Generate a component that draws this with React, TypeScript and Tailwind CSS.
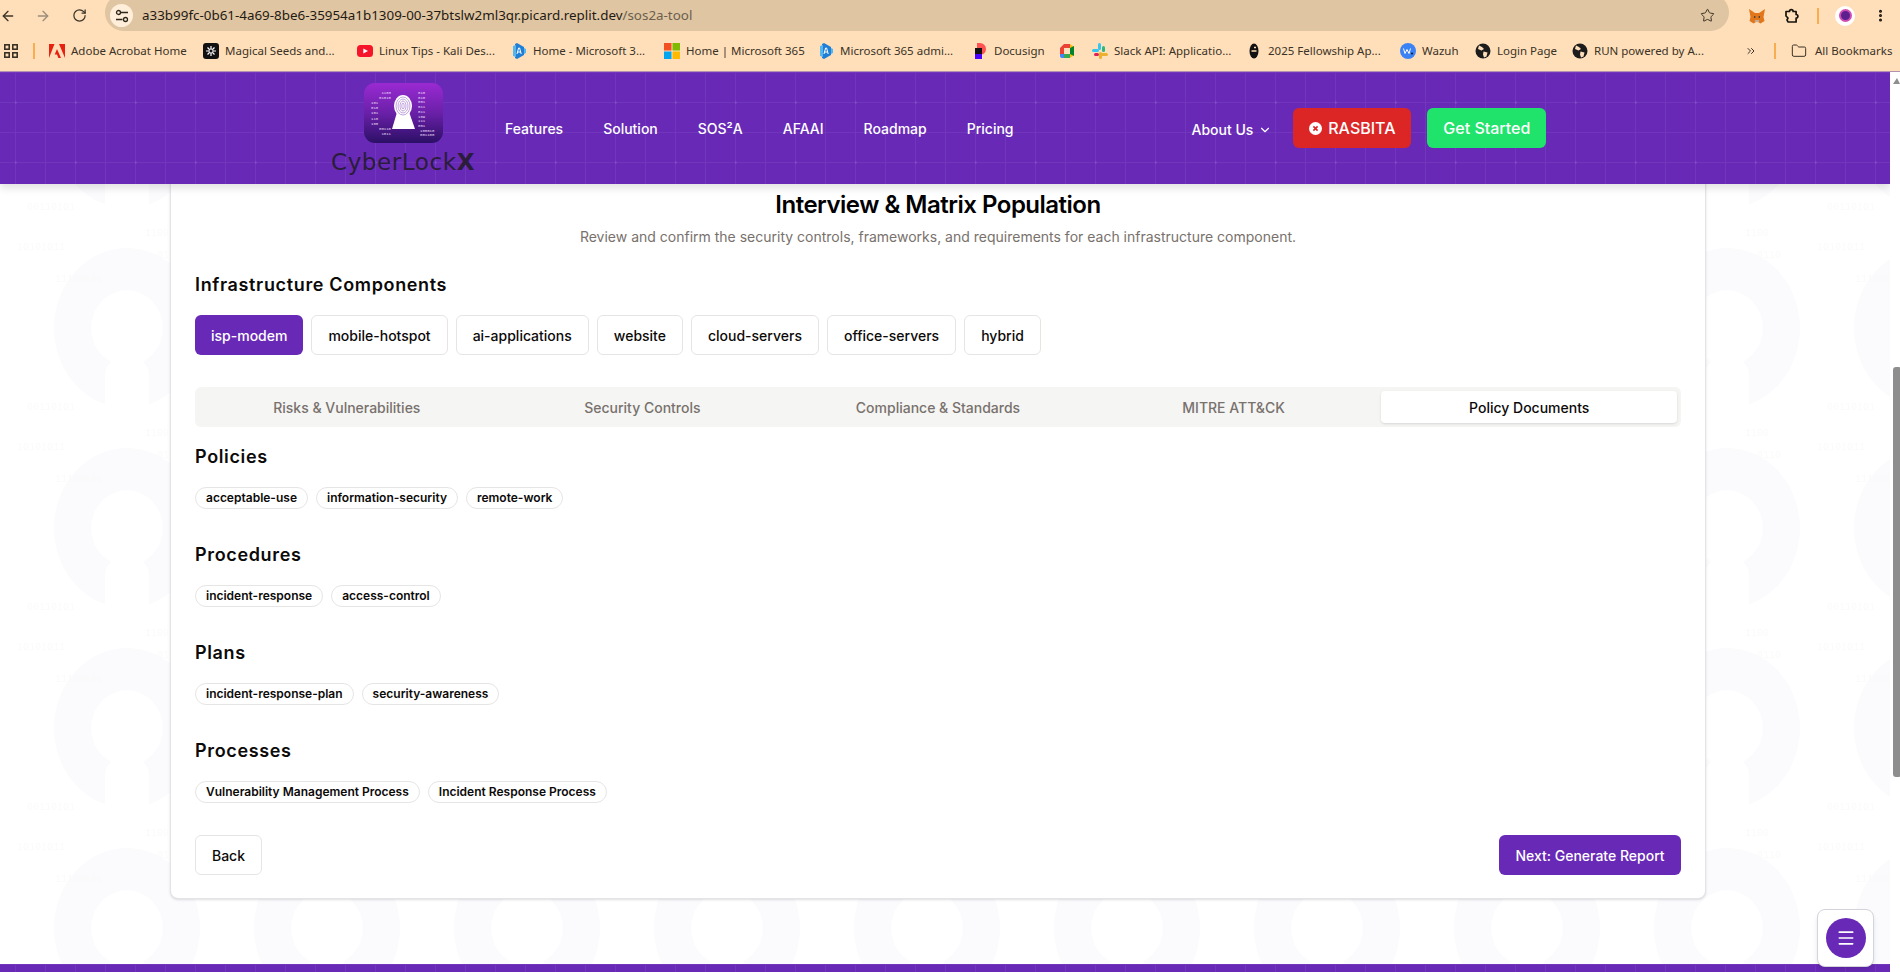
import { ArrowLeft, ArrowRight, RotateCw, Star, EllipsisVertical, ChevronsRight, Folder, ChevronDown, Menu } from "lucide-react";

const PURPLE = "bg-[#6829b7]";

function Fav({ kind }: { kind: string }) {
  if (kind === "adobe")
    return <svg width="16" height="16" viewBox="0 0 16 16"><path d="M0 1h5.5L0 15zM10 1h6v14zM8 6l4 9H9.4L8 11.5H5.7z" fill="#e8200f" /></svg>;
  if (kind === "magic")
    return <svg width="16" height="16" viewBox="0 0 16 16"><rect width="16" height="16" rx="3" fill="#111" /><g stroke="#fff" strokeWidth="1.2"><path d="M8 3v10M3 8h10M4.5 4.5l7 7M11.5 4.5l-7 7" /></g><circle cx="8" cy="8" r="2" fill="#111" stroke="#fff" strokeWidth="0.8" /></svg>;
  if (kind === "yt")
    return <svg width="16" height="16" viewBox="0 0 16 16"><rect y="2" width="16" height="12" rx="3.5" fill="#f5142a" /><path d="M6.3 5.4v5.2L11 8z" fill="#fff" /></svg>;
  if (kind === "ai")
    return <svg width="16" height="16" viewBox="0 0 16 16"><path d="M6 0l7 4v8l-7 4-2-1V1z" fill="#1f7fd6" /><path d="M2 3l3-1v12l-3-1z" fill="#55b6ee" /><path d="M13 5l2 1v4l-2 1z" fill="#55b6ee" /><path d="M6 11l1.6-6h1l1.6 6M6.6 9h3" stroke="#fff" strokeWidth="1" fill="none" /></svg>;
  if (kind === "ms")
    return <svg width="16" height="16" viewBox="0 0 16 16"><rect width="7.5" height="7.5" fill="#f25022" /><rect x="8.5" width="7.5" height="7.5" fill="#7fba00" /><rect y="8.5" width="7.5" height="7.5" fill="#00a4ef" /><rect x="8.5" y="8.5" width="7.5" height="7.5" fill="#ffb900" /></svg>;
  if (kind === "docu")
    return <svg width="16" height="16" viewBox="0 0 16 16"><path d="M5 0h3a6 6 0 0 1 6 6 6 6 0 0 1-4 5.5V5H5z" fill="#ff5252" /><rect x="3" y="5" width="7" height="6" fill="#111" /><rect x="3" y="11" width="7" height="5" fill="#4c00ff" /></svg>;
  if (kind === "meet")
    return <svg width="16" height="16" viewBox="0 0 16 16"><path d="M1 5l4-4h6v4H5v6H1z" fill="#ea4335" /><path d="M1 11h4v4H3a2 2 0 0 1-2-2z" fill="#4285f4" /><path d="M5 11h6v4H5z" fill="#34a853" /><path d="M11 1v14l4-3V4z" fill="#fbbc04" /><path d="M11 5v6l4 2V3z" fill="#00832d" /></svg>;
  if (kind === "slack")
    return <svg width="16" height="16" viewBox="0 0 16 16"><rect x="6" y="0" width="3" height="7" rx="1.5" fill="#36c5f0" /><rect x="0" y="6" width="7" height="3" rx="1.5" fill="#36c5f0" /><rect x="10" y="3" width="3" height="6" rx="1.5" fill="#2eb67d" /><rect x="9" y="10" width="7" height="3" rx="1.5" fill="#ecb22e" /><rect x="7" y="9" width="3" height="7" rx="1.5" fill="#ecb22e" /><rect x="2" y="10" width="5" height="3" rx="1.5" fill="#e01e5a" /></svg>;
  if (kind === "e")
    return <svg width="16" height="16" viewBox="0 0 16 16"><ellipse cx="8" cy="8" rx="4.5" ry="7.5" fill="#111" /><path d="M5.5 8h5M8 4.5h2" stroke="#ffdfb9" strokeWidth="1.4" /></svg>;
  if (kind === "wazuh")
    return <svg width="16" height="16" viewBox="0 0 16 16"><circle cx="8" cy="8" r="8" fill="#3b82f6" /><path d="M3.5 5.5l1.5 5 2-4 2 4 1.5-5" stroke="#fff" strokeWidth="1" fill="none" /><circle cx="12" cy="10.5" r="1" fill="#111" /></svg>;
  return <svg width="16" height="16" viewBox="0 0 16 16"><circle cx="8" cy="8" r="7.5" fill="#1c1c1c" /><path d="M4 2.5l3 1.5 2 2-2.5 1.5L3 6zM8.5 8.5l4 1-1 4-2.5 1-1-3z" fill="#ffdfb9" /></svg>;
}

const bookmarks = [
  { fav: "adobe", text: "Adobe Acrobat Home", box: "w-[154px]" },
  { fav: "magic", text: "Magical Seeds and...", box: "w-[154px]" },
  { fav: "yt", text: "Linux Tips - Kali Des...", box: "w-[154px]" },
  { fav: "ai", text: "Home - Microsoft 3...", box: "w-[153px]" },
  { fav: "ms", text: "Home | Microsoft 365", box: "w-[154px]" },
  { fav: "ai", text: "Microsoft 365 admi...", box: "w-[154px]" },
  { fav: "docu", text: "Docusign", box: "w-[87px]" },
  { fav: "meet", text: "", box: "w-[33px]" },
  { fav: "slack", text: "Slack API: Applicatio...", box: "w-[154px]" },
  { fav: "e", text: "2025 Fellowship Ap...", box: "w-[154px]" },
  { fav: "wazuh", text: "Wazuh", box: "w-[75px]" },
  { fav: "globe", text: "Login Page", box: "w-[97px]" },
  { fav: "globe", text: "RUN powered by A...", box: "w-[173px]" },
];

const components = [
  { name: "isp-modem", on: true },
  { name: "mobile-hotspot", on: false },
  { name: "ai-applications", on: false },
  { name: "website", on: false },
  { name: "cloud-servers", on: false },
  { name: "office-servers", on: false },
  { name: "hybrid", on: false },
];

const tabs = ["Risks & Vulnerabilities", "Security Controls", "Compliance & Standards", "MITRE ATT&CK", "Policy Documents"];

const sections = [
  { title: "Policies", items: ["acceptable-use", "information-security", "remote-work"] },
  { title: "Procedures", items: ["incident-response", "access-control"] },
  { title: "Plans", items: ["incident-response-plan", "security-awareness"] },
  { title: "Processes", items: ["Vulnerability Management Process", "Incident Response Process"] },
];

function Grid({ id }: { id: string }) {
  return (
    <svg className="absolute inset-0 w-full h-full pointer-events-none" aria-hidden="true">
      <defs>
        <pattern id={id} x="15" y="0" width="30" height="30" patternUnits="userSpaceOnUse">
          <path d="M0 0V30M0 0H30" stroke="#ffffff" strokeOpacity="0.06" strokeWidth="1" fill="none" transform="translate(0.5 0.5)" />
        </pattern>
        <pattern id={id + "d"} x="15" y="0" width="60" height="60" patternUnits="userSpaceOnUse">
          <circle cx="0.5" cy="30.5" r="1.2" fill="#ffffff" fillOpacity="0.12" />
        </pattern>
      </defs>
      <rect width="100%" height="100%" fill={`url(#${id})`} />
      <rect width="100%" height="100%" fill={`url(#${id}d)`} />
    </svg>
  );
}

function Watermark() {
  return (
    <svg className="absolute inset-0 w-full h-full pointer-events-none" aria-hidden="true">
      <defs>
        <pattern id="wm" x="0" y="-32" width="200" height="200" patternUnits="userSpaceOnUse">
          <ellipse cx="127" cy="88" rx="73" ry="80" fill="#fbfbfd" />
          <ellipse cx="127" cy="88" rx="36" ry="38" fill="#ffffff" />
          <path d="M105 200V134a22 18 0 0 1 44 0V200z" fill="#ffffff" />
          <g fontFamily="Liberation Mono, monospace" fontSize="10" fill="#fafafb">
            <text x="17" y="10">10101011</text>
            <text x="55" y="42">11100101</text>
            <text x="27" y="170">00110101</text>
            <text x="157" y="18">0110</text>
            <text x="145" y="196">1100</text>
          </g>
        </pattern>
      </defs>
      <rect width="100%" height="100%" fill="url(#wm)" />
    </svg>
  );
}

function Logo() {
  const left = ["1103", "01010", "101", "010", "101", "110", "100", "00110", "1011"];
  const right = ["010", "010", "001", "011", "011", "109", "111", "001", "100010", "001100"];
  return (
    <div className="flex flex-col items-center w-[142px]">
      <div className="w-[79px] h-[60px]">
        <svg width="79" height="60" viewBox="0 0 79 60">
          <defs>
            <linearGradient id="lg" x1="0" y1="0" x2="0" y2="1">
              <stop offset="0" stopColor="#9a2ad2" />
              <stop offset="0.5" stopColor="#6a20a8" />
              <stop offset="1" stopColor="#2c1066" />
            </linearGradient>
          </defs>
          <rect width="79" height="60" rx="11" fill="url(#lg)" />
          <g fontFamily="Liberation Mono, monospace" fontSize="4" fill="#e9dcf6">
            {left.map((t, i) => (
              <text key={i} x={i < 2 ? 27 - t.length * 2.4 : i > 6 ? 27 - t.length * 2.4 : 7} y={11 + i * 5.1}>{t}</text>
            ))}
            {right.map((t, i) => (
              <text key={i} x={i > 7 ? 56 : 54} y={11 + i * 4.7}>{t}</text>
            ))}
          </g>
          <path d="M34 26h10l7 20H28z" fill="#ffffff" />
          <ellipse cx="39" cy="23" rx="9" ry="11" fill="#ffffff" />
          <g fill="none" stroke="#a67bd0" strokeWidth="0.7">
            <ellipse cx="39" cy="23" rx="7" ry="9" />
            <ellipse cx="39" cy="23" rx="5" ry="7" />
            <ellipse cx="39" cy="23" rx="3" ry="5" />
            <ellipse cx="39" cy="23" rx="1.2" ry="3" />
          </g>
        </svg>
      </div>
      <div className="mt-[9px] text-[23px] leading-[20px] text-[#2a1c3a] tracking-[0.6px] font-['DejaVu_Sans',sans-serif]">
        CyberLock<span className="font-bold">X</span>
      </div>
    </div>
  );
}

export default function App() {
  return (
    <div className="w-[1900px] h-[972px] overflow-hidden flex flex-col bg-white font-['Inter',sans-serif] text-[#0c0a09]">
      {/* Browser chrome */}
      <div className="h-[72px] shrink-0 bg-[#ffdfb9] border-b border-[#b491ae] flex flex-col">
        <div className="h-[31px] flex items-center text-[#3d3428]">
          <div className="w-[16px] flex justify-end"><ArrowLeft size={16} strokeWidth={2} /></div>
          <div className="w-[35px] flex justify-end"><ArrowRight size={16} strokeWidth={2} className="text-[#9a8d7a]" /></div>
          <div className="w-[36px] flex justify-end"><RotateCw size={15} strokeWidth={2} /></div>
          <div className="ml-[18px] w-[1624px] h-[37px] -mt-[6px] bg-[#dfc5a2] rounded-full flex items-center pt-[6px] pl-[5px] pr-[14px]">
            <div className="w-[23px] h-[23px] rounded-full bg-[#ffeed9] flex items-center justify-center">
              <svg width="14" height="14" viewBox="0 0 14 14" fill="none" stroke="#2f281d" strokeWidth="1.3">
                <circle cx="3.5" cy="3.5" r="2" /><path d="M6 3.5h7M1 10.5h6.5" /><circle cx="10.5" cy="10.5" r="2" />
              </svg>
            </div>
            <div className="ml-[9px] text-[13.4px] font-['Noto_Sans',sans-serif] whitespace-nowrap">
              <span className="text-[#1f1a12]">a33b99fc-0b61-4a69-8be6-35954a1b1309-00-37btslw2ml3qr.picard.replit.dev</span>
              <span className="text-[#6c5f4d]">/sos2a-tool</span>
            </div>
            <div className="ml-auto"><Star size={15} strokeWidth={1.6} /></div>
          </div>
          <div className="ml-[19px] w-[18px] h-[18px]">
            <svg width="18" height="18" viewBox="0 0 18 18"><path d="M1 2l6 4h4l6-4-1.5 8 1 4-4 2.5L10 15H8l-2.5 1.5-4-2.5 1-4z" fill="#e2761b" /><path d="M6 9l2 1-2 1zM12 9l-2 1 2 1z" fill="#23343f" /><path d="M7 13h4v2H7z" fill="#c0ad9e" /></svg>
          </div>
          <div className="ml-[18px] w-[16px] h-[16px]">
            <svg width="16" height="16" viewBox="0 0 16 16" fill="none" stroke="#17130c" strokeWidth="1.7" strokeLinejoin="round">
              <path d="M2 3.5h3.5a1.8 1.8 0 0 1 3.6 0h3v3a1.8 1.8 0 0 1 0 3.6v3.9H4l-1-2.2 1-1.8-2-2z" />
            </svg>
          </div>
          <div className="ml-[17px] w-[2px] h-[16px] bg-[#f8ad52]" />
          <div className="ml-[16px] w-[20px] h-[20px] rounded-full bg-white flex items-center justify-center">
            <div className="w-[13px] h-[13px] rounded-full border-[2px] border-[#d04cb4] bg-[#5b1f8e]" />
          </div>
          <div className="ml-[18px]"><EllipsisVertical size={15} strokeWidth={2.8} className="text-[#17130c]" /></div>
        </div>
        <div className="h-[40px] flex items-center text-[11.5px] text-[#3a3226] font-['Noto_Sans',sans-serif] whitespace-nowrap">
          <div className="ml-[4px] w-[14px] h-[14px] shrink-0">
            <svg width="14" height="14" viewBox="0 0 14 14" fill="none" stroke="#2f281d" strokeWidth="1.5">
              <rect x="0.8" y="0.8" width="4.4" height="4.4" /><rect x="8.8" y="0.8" width="4.4" height="4.4" /><rect x="0.8" y="8.8" width="4.4" height="4.4" /><rect x="8.8" y="8.8" width="4.4" height="4.4" />
            </svg>
          </div>
          <div className="ml-[15px] w-[2px] h-[16px] bg-[#f8ad52] shrink-0" />
          <div className="w-[14px] shrink-0" />
          {bookmarks.map((b) => (
            <div key={b.text + b.fav} className={`${b.box} shrink-0 flex items-center gap-[6px]`}>
              <Fav kind={b.fav} />
              {b.text && <span>{b.text}</span>}
            </div>
          ))}
          <div className="w-[12px] shrink-0 flex justify-center"><ChevronsRight size={14} /></div>
          <div className="ml-[17px] w-[2px] h-[16px] bg-[#f8ad52] shrink-0" />
          <div className="ml-[15px] shrink-0"><Folder size={16} strokeWidth={1.5} /></div>
          <span className="ml-[8px]">All Bookmarks</span>
        </div>
      </div>

      {/* Page */}
      <div className="flex-1 min-h-0 flex">
        <div className="w-[1890px] relative flex flex-col overflow-hidden">
          <Watermark />
          <header className={`relative z-10 h-[112px] shrink-0 ${PURPLE} shadow-[0_4px_8px_rgba(0,0,0,0.12)] flex items-start`}>
            <Grid id="hg" />
            <div className="relative ml-[332px] mt-[11px]"><Logo /></div>
            <nav className="relative ml-[31px] mt-[47px] flex gap-[40px] text-[14px] font-medium text-white leading-[20px]">
              <span>Features</span>
              <span>Solution</span>
              <span>SOS²A</span>
              <span>AFAAI</span>
              <span>Roadmap</span>
              <span>Pricing</span>
            </nav>
            <div className="relative ml-[178px] mt-[48px] flex items-center gap-[5px] text-[14px] font-medium text-white leading-[20px]">
              <span>About Us</span>
              <ChevronDown size={14} />
            </div>
            <button className="relative ml-[21px] mt-[36px] w-[118px] h-[40px] rounded-md bg-[#dc2626] text-white text-[16px] font-medium flex items-center justify-center gap-[6px]">
              <svg width="13" height="13" viewBox="0 0 13 13"><circle cx="6.5" cy="6.5" r="6.5" fill="#fff" /><path d="M4.4 4.4l4.2 4.2M8.6 4.4l-4.2 4.2" stroke="#dc2626" strokeWidth="1.6" /></svg>
              RASBITA
            </button>
            <button className="relative ml-[16px] mt-[36px] w-[119px] h-[40px] rounded-md bg-[#20e36b] text-white text-[16px] font-medium">Get Started</button>
          </header>

          <main className="relative flex-1 min-h-0 pl-[170px]">
            <div className="w-[1536px] -mt-[16px] bg-white border border-[#e3e3e8] rounded-lg shadow-sm px-[24px] pt-[20px] pb-[23px]">
              <h1 className="text-center text-[24px] leading-[32px] font-semibold tracking-[-0.5px] text-black">Interview &amp; Matrix Population</h1>
              <p className="mt-[6px] text-center text-[14px] leading-[20px] text-[#78716c]">Review and confirm the security controls, frameworks, and requirements for each infrastructure component.</p>
              <h2 className="mt-[24px] mb-[16px] text-[18px] leading-[28px] font-semibold tracking-[0.65px]">Infrastructure Components</h2>
              <div className="flex gap-[8px] mb-[32px]">
                {components.map((c) =>
                  c.on ? (
                    <button key={c.name} className="h-[40px] px-[16px] rounded-md bg-[#6829b7] text-white text-[14px] font-medium">{c.name}</button>
                  ) : (
                    <button key={c.name} className="h-[40px] px-[16px] rounded-md bg-white border border-[#e7e5e4] text-[14px] font-medium">{c.name}</button>
                  )
                )}
              </div>
              <div className="h-[40px] rounded-md bg-[#f5f5f4] p-[4px] grid grid-cols-5 text-[14px] font-medium text-[#78716c]">
                {tabs.map((t, i) =>
                  i === 4 ? (
                    <div key={t} className="rounded-sm bg-white text-[#0c0a09] shadow-sm flex items-center justify-center">{t}</div>
                  ) : (
                    <div key={t} className="flex items-center justify-center">{t}</div>
                  )
                )}
              </div>
              <div className="mt-[16px]">
                {sections.map((s) => (
                  <section key={s.title} className="mb-[32px]">
                    <h3 className="mb-[16px] text-[18px] leading-[28px] font-semibold tracking-[0.65px]">{s.title}</h3>
                    <div className="flex gap-[8px]">
                      {s.items.map((it) => (
                        <span key={it} className="h-[22px] px-[10px] rounded-full border border-[#e7e5e4] text-[12px] leading-[20px] font-semibold">{it}</span>
                      ))}
                    </div>
                  </section>
                ))}
              </div>
              <div className="flex justify-between">
                <button className="h-[40px] w-[67px] rounded-md bg-white border border-[#e7e5e4] text-[14px] font-medium">Back</button>
                <button className="h-[40px] w-[182px] rounded-md bg-[#6829b7] text-white text-[14px] font-medium">Next: Generate Report</button>
              </div>
            </div>
          </main>

          <div className={`relative h-[8px] shrink-0 overflow-hidden ${PURPLE}`}><Grid id="fg" /></div>

          <div className="absolute z-20 left-[1817px] top-[837px] w-[57px] h-[58px] bg-white border border-[#d4d4dc] rounded-lg shadow-md flex items-center justify-center">
            <div className="w-[40px] h-[40px] rounded-full bg-[#6829b7] flex items-center justify-center text-white"><Menu size={20} /></div>
          </div>
        </div>

        {/* Scrollbar */}
        <div className="w-[10px] bg-white flex flex-col items-end">
          <div className="mt-[6px] w-0 h-0 border-l-[4px] border-r-[3px] border-b-[6px] border-l-transparent border-r-transparent border-b-[#8e8e8e]" />
          <div className="mt-[283px] w-[7px] h-[410px] rounded-l-[3px] rounded-r-[1px] bg-[#8e8e8e]" />
        </div>
      </div>
    </div>
  );
}
